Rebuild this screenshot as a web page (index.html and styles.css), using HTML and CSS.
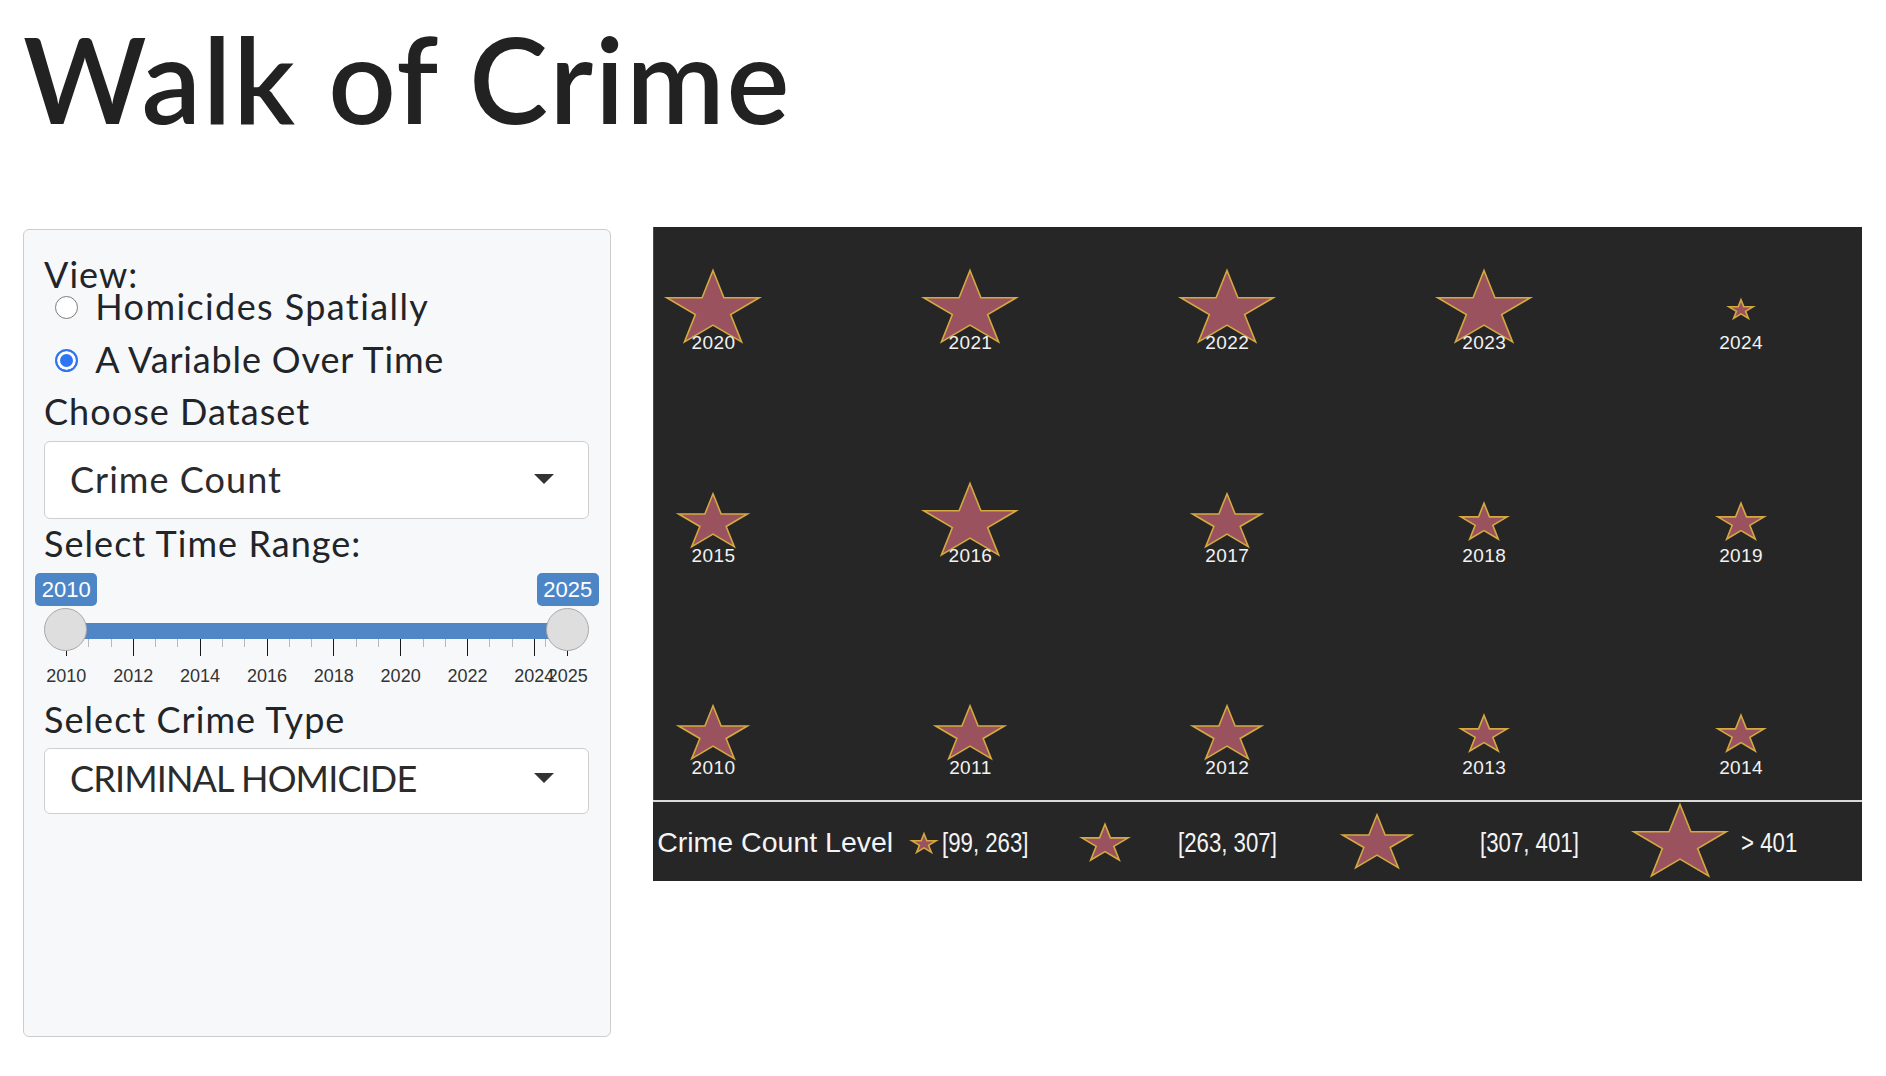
FILE: index.html
```html
<!DOCTYPE html>
<html lang="en">
<head>
<meta charset="utf-8">
<title>Walk of Crime</title>
<link rel="stylesheet" href="styles.css">
</head>
<body>
<div class="page">
  <h1 class="title">Walk of Crime</h1>
  <div class="main">
    <aside class="panel">
      <div class="lbl">View:</div>
      <div class="radio-row">
        <span class="radio"></span><span class="radio-text wide">Homicides Spatially</span>
      </div>
      <div class="radio-row second">
        <span class="radio checked"></span><span class="radio-text tight">A Variable Over Time</span>
      </div>
      <div class="lbl mt-dataset">Choose Dataset</div>
      <div class="select s1"><span>Crime Count</span><span class="caret"></span></div>
      <div class="lbl mt-range">Select Time Range:</div>
      <div class="slider">
        <div class="slider-values"><span class="val">2010</span><span class="val">2025</span></div>
        <div class="track"></div>
        <div class="ticks">
          <i class="tick"></i><i class="tick minor"></i><i class="tick minor"></i>
          <i class="tick"></i><i class="tick minor"></i><i class="tick minor"></i>
          <i class="tick"></i><i class="tick minor"></i><i class="tick minor"></i>
          <i class="tick"></i><i class="tick minor"></i><i class="tick minor"></i>
          <i class="tick"></i><i class="tick minor"></i><i class="tick minor"></i>
          <i class="tick"></i><i class="tick minor"></i><i class="tick minor"></i>
          <i class="tick"></i><i class="tick minor"></i><i class="tick minor"></i>
          <i class="tick t2024"></i><i class="tick minor t-last-minor"></i><i class="tick"></i>
        </div>
        <div class="tick-labels">
          <span class="tl">2010</span><span class="tl">2012</span><span class="tl">2014</span><span class="tl">2016</span><span class="tl">2018</span><span class="tl">2020</span><span class="tl">2022</span><span class="tl">2024</span><span class="tl last">2025</span>
        </div>
        <span class="handle h-left"></span>
        <span class="handle h-right"></span>
      </div>
      <div class="lbl">Select Crime Type</div>
      <div class="select s2"><span class="caps">CRIMINAL HOMICIDE</span><span class="caret"></span></div>
    </aside>

    <section class="chart">
      <div class="plot">
        <div class="cell"><svg class="star" width="120" height="100" viewBox="0 0 120 100"><polygon class="sp" vector-effect="non-scaling-stroke" transform="translate(60 50) scale(48.6 39.5)" points="0,-1 0.2245,-0.309 0.9511,-0.309 0.3633,0.118 0.5878,0.809 0,0.382 -0.5878,0.809 -0.3633,0.118 -0.9511,-0.309 -0.2245,-0.309"/></svg><span class="yr">2020</span></div>
        <div class="cell"><svg class="star" width="120" height="100" viewBox="0 0 120 100"><polygon class="sp" vector-effect="non-scaling-stroke" transform="translate(60 50) scale(48.6 39.5)" points="0,-1 0.2245,-0.309 0.9511,-0.309 0.3633,0.118 0.5878,0.809 0,0.382 -0.5878,0.809 -0.3633,0.118 -0.9511,-0.309 -0.2245,-0.309"/></svg><span class="yr">2021</span></div>
        <div class="cell"><svg class="star" width="120" height="100" viewBox="0 0 120 100"><polygon class="sp" vector-effect="non-scaling-stroke" transform="translate(60 50) scale(48.6 39.5)" points="0,-1 0.2245,-0.309 0.9511,-0.309 0.3633,0.118 0.5878,0.809 0,0.382 -0.5878,0.809 -0.3633,0.118 -0.9511,-0.309 -0.2245,-0.309"/></svg><span class="yr">2022</span></div>
        <div class="cell"><svg class="star" width="120" height="100" viewBox="0 0 120 100"><polygon class="sp" vector-effect="non-scaling-stroke" transform="translate(60 50) scale(48.6 39.5)" points="0,-1 0.2245,-0.309 0.9511,-0.309 0.3633,0.118 0.5878,0.809 0,0.382 -0.5878,0.809 -0.3633,0.118 -0.9511,-0.309 -0.2245,-0.309"/></svg><span class="yr">2023</span></div>
        <div class="cell"><svg class="star" width="120" height="100" viewBox="0 0 120 100"><polygon class="sp" vector-effect="non-scaling-stroke" transform="translate(60 50) scale(12.6 10.3)" points="0,-1 0.2245,-0.309 0.9511,-0.309 0.3633,0.118 0.5878,0.809 0,0.382 -0.5878,0.809 -0.3633,0.118 -0.9511,-0.309 -0.2245,-0.309"/></svg><span class="yr">2024</span></div>

        <div class="cell"><svg class="star" width="120" height="100" viewBox="0 0 120 100"><polygon class="sp" vector-effect="non-scaling-stroke" transform="translate(60 50) scale(36.2 29.2)" points="0,-1 0.2245,-0.309 0.9511,-0.309 0.3633,0.118 0.5878,0.809 0,0.382 -0.5878,0.809 -0.3633,0.118 -0.9511,-0.309 -0.2245,-0.309"/></svg><span class="yr">2015</span></div>
        <div class="cell"><svg class="star" width="120" height="100" viewBox="0 0 120 100"><polygon class="sp" vector-effect="non-scaling-stroke" transform="translate(60 50) scale(48.6 39.5)" points="0,-1 0.2245,-0.309 0.9511,-0.309 0.3633,0.118 0.5878,0.809 0,0.382 -0.5878,0.809 -0.3633,0.118 -0.9511,-0.309 -0.2245,-0.309"/></svg><span class="yr">2016</span></div>
        <div class="cell"><svg class="star" width="120" height="100" viewBox="0 0 120 100"><polygon class="sp" vector-effect="non-scaling-stroke" transform="translate(60 50) scale(36.2 29.2)" points="0,-1 0.2245,-0.309 0.9511,-0.309 0.3633,0.118 0.5878,0.809 0,0.382 -0.5878,0.809 -0.3633,0.118 -0.9511,-0.309 -0.2245,-0.309"/></svg><span class="yr">2017</span></div>
        <div class="cell"><svg class="star" width="120" height="100" viewBox="0 0 120 100"><polygon class="sp" vector-effect="non-scaling-stroke" transform="translate(60 50) scale(24.3 19.8)" points="0,-1 0.2245,-0.309 0.9511,-0.309 0.3633,0.118 0.5878,0.809 0,0.382 -0.5878,0.809 -0.3633,0.118 -0.9511,-0.309 -0.2245,-0.309"/></svg><span class="yr">2018</span></div>
        <div class="cell"><svg class="star" width="120" height="100" viewBox="0 0 120 100"><polygon class="sp" vector-effect="non-scaling-stroke" transform="translate(60 50) scale(24.3 19.8)" points="0,-1 0.2245,-0.309 0.9511,-0.309 0.3633,0.118 0.5878,0.809 0,0.382 -0.5878,0.809 -0.3633,0.118 -0.9511,-0.309 -0.2245,-0.309"/></svg><span class="yr">2019</span></div>

        <div class="cell"><svg class="star" width="120" height="100" viewBox="0 0 120 100"><polygon class="sp" vector-effect="non-scaling-stroke" transform="translate(60 50) scale(36.2 29.2)" points="0,-1 0.2245,-0.309 0.9511,-0.309 0.3633,0.118 0.5878,0.809 0,0.382 -0.5878,0.809 -0.3633,0.118 -0.9511,-0.309 -0.2245,-0.309"/></svg><span class="yr">2010</span></div>
        <div class="cell"><svg class="star" width="120" height="100" viewBox="0 0 120 100"><polygon class="sp" vector-effect="non-scaling-stroke" transform="translate(60 50) scale(36.2 29.2)" points="0,-1 0.2245,-0.309 0.9511,-0.309 0.3633,0.118 0.5878,0.809 0,0.382 -0.5878,0.809 -0.3633,0.118 -0.9511,-0.309 -0.2245,-0.309"/></svg><span class="yr">2011</span></div>
        <div class="cell"><svg class="star" width="120" height="100" viewBox="0 0 120 100"><polygon class="sp" vector-effect="non-scaling-stroke" transform="translate(60 50) scale(36.2 29.2)" points="0,-1 0.2245,-0.309 0.9511,-0.309 0.3633,0.118 0.5878,0.809 0,0.382 -0.5878,0.809 -0.3633,0.118 -0.9511,-0.309 -0.2245,-0.309"/></svg><span class="yr">2012</span></div>
        <div class="cell"><svg class="star" width="120" height="100" viewBox="0 0 120 100"><polygon class="sp" vector-effect="non-scaling-stroke" transform="translate(60 50) scale(24.3 19.8)" points="0,-1 0.2245,-0.309 0.9511,-0.309 0.3633,0.118 0.5878,0.809 0,0.382 -0.5878,0.809 -0.3633,0.118 -0.9511,-0.309 -0.2245,-0.309"/></svg><span class="yr">2013</span></div>
        <div class="cell"><svg class="star" width="120" height="100" viewBox="0 0 120 100"><polygon class="sp" vector-effect="non-scaling-stroke" transform="translate(60 50) scale(24.3 19.8)" points="0,-1 0.2245,-0.309 0.9511,-0.309 0.3633,0.118 0.5878,0.809 0,0.382 -0.5878,0.809 -0.3633,0.118 -0.9511,-0.309 -0.2245,-0.309"/></svg><span class="yr">2014</span></div>
      </div>
      <div class="sep"></div>
      <div class="legend">
        <span class="lg-title">Crime Count Level</span>
        <svg class="lg-star" width="30" height="30" viewBox="0 0 30 30"><polygon class="sp" vector-effect="non-scaling-stroke" transform="translate(15 15) scale(12.6 10.3)" points="0,-1 0.2245,-0.309 0.9511,-0.309 0.3633,0.118 0.5878,0.809 0,0.382 -0.5878,0.809 -0.3633,0.118 -0.9511,-0.309 -0.2245,-0.309"/></svg>
        <span class="lg-lbl"><span class="narrow">[99, 263]</span></span>
        <svg class="lg-star" width="60" height="50" viewBox="0 0 60 50"><polygon class="sp" vector-effect="non-scaling-stroke" transform="translate(30 25) scale(24.3 19.8)" points="0,-1 0.2245,-0.309 0.9511,-0.309 0.3633,0.118 0.5878,0.809 0,0.382 -0.5878,0.809 -0.3633,0.118 -0.9511,-0.309 -0.2245,-0.309"/></svg>
        <span class="lg-lbl"><span class="narrow">[263, 307]</span></span>
        <svg class="lg-star" width="80" height="70" viewBox="0 0 80 70"><polygon class="sp" vector-effect="non-scaling-stroke" transform="translate(40 35) scale(36.2 29.2)" points="0,-1 0.2245,-0.309 0.9511,-0.309 0.3633,0.118 0.5878,0.809 0,0.382 -0.5878,0.809 -0.3633,0.118 -0.9511,-0.309 -0.2245,-0.309"/></svg>
        <span class="lg-lbl"><span class="narrow">[307, 401]</span></span>
        <svg class="lg-star" width="104" height="84" viewBox="0 0 104 84"><polygon class="sp" vector-effect="non-scaling-stroke" transform="translate(52 42) scale(48.6 39.5)" points="0,-1 0.2245,-0.309 0.9511,-0.309 0.3633,0.118 0.5878,0.809 0,0.382 -0.5878,0.809 -0.3633,0.118 -0.9511,-0.309 -0.2245,-0.309"/></svg>
        <span class="lg-lbl"><span class="narrow">&gt; 401</span></span>
      </div>
    </section>
  </div>
</div>
</body>
</html>
```

FILE: styles.css
```css
html, body {
  margin: 0;
  padding: 0;
  background: #ffffff;
}

body {
  font-family: Lato, "Noto Sans", sans-serif;
  color: #212529;
}

.page {
  padding: 19px 25px 0 23px;
}

.title {
  margin: 0 0 89.5px 0;
  height: 118.5px;
  font-size: 118.5px;
  line-height: 1;
  font-weight: 600;
  letter-spacing: 1.8px;
  color: #222222;
  white-space: nowrap;
}

.main {
  display: flex;
  align-items: flex-start;
  gap: 41.5px;
}

/* ---------- sidebar panel ---------- */
.panel {
  flex: none;
  margin-top: 2px;
  width: 588px;
  height: 808px;
  box-sizing: border-box;
  border: 1px solid #cdcdcd;
  border-radius: 6px;
  background: #f7f8fa;
  padding: 28px 21px 0 20px;
  font-size: 36px;
  letter-spacing: 1.05px;
}

.lbl {
  line-height: 32px;
  height: 32px;
  white-space: nowrap;
}

.mt-dataset {
  margin-top: 20px;
}

.mt-range {
  margin-top: 7.8px;
}

.radio-row {
  display: flex;
  align-items: flex-start;
  height: 32px;
  line-height: 32px;
  white-space: nowrap;
}

.radio-row.second {
  margin-top: 21px;
}

.wide {
  letter-spacing: 1.4px;
}

.tight {
  letter-spacing: 0.85px;
}

.radio {
  flex: none;
  width: 23px;
  height: 23px;
  box-sizing: border-box;
  margin: 6px 17.5px 0 10.8px;
  border-radius: 50%;
  border: 1.5px solid #7b7b7b;
  background: #ffffff;
}

.radio.checked {
  border: 2px solid #2f74f2;
  background: #2f74f2;
  box-shadow: inset 0 0 0 3px #ffffff;
}

.select {
  display: flex;
  align-items: center;
  justify-content: space-between;
  box-sizing: border-box;
  background: #ffffff;
  border: 1px solid #cfcfcf;
  border-radius: 6px;
  line-height: 44px;
  white-space: nowrap;
  color: #2b2b2b;
}

.select.s1 {
  margin-top: 13.7px;
  height: 78.3px;
  padding: 0 34px 2px 25px;
}

.select.s2 {
  margin-top: 12.9px;
  height: 66.6px;
  padding: 0 34px 5px 25px;
}

.caps {
  letter-spacing: -0.85px;
}

.caret {
  width: 0;
  height: 0;
  border-left: 10px solid transparent;
  border-right: 10px solid transparent;
  border-top: 10px solid #333333;
}

/* ---------- range slider ---------- */
.slider {
  position: relative;
  height: 144px;
  box-sizing: border-box;
  padding-top: 13.9px;
  letter-spacing: 0;
}

.slider-values {
  display: flex;
  justify-content: space-between;
  margin: 0 -9.6px 0 -8.6px;
}

.val {
  width: 61.5px;
  height: 33.6px;
  line-height: 34px;
  border-radius: 5px;
  background: #4c86c7;
  color: #ffffff;
  font-family: "Liberation Sans", Arial, sans-serif;
  font-size: 22px;
  text-align: center;
}

.track {
  margin: 17px 0 0 22px;
  width: 502px;
  height: 16px;
  background: #5186c6;
}

.ticks {
  display: flex;
  align-items: flex-start;
  margin-left: 22px;
  height: 17px;
}

.tick {
  flex: none;
  width: 1px;
  height: 17px;
  margin-right: 21.29px;
  background: #1a1a1a;
}

.tick.minor {
  height: 8px;
  background: #b8b8b8;
}

.tick.t2024 {
  margin-right: 10.2px;
}

.tick.t-last-minor {
  margin-right: 21.1px;
}

.tick-labels {
  display: flex;
  margin: 9.5px 0 0 -11.1px;
  font-family: "Liberation Sans", Arial, sans-serif;
  font-size: 18px;
  line-height: 20px;
  color: #333333;
}

.tl {
  flex: none;
  width: 66.86px;
  text-align: center;
}

.tl.last {
  width: 60px;
  margin-left: -30px;
}

.handle {
  position: absolute;
  top: 49.4px;
  width: 43px;
  height: 43px;
  box-sizing: border-box;
  border-radius: 50%;
  border: 1.5px solid #a8a8a8;
  background: #dedede;
}

.h-left {
  left: 0;
}

.h-right {
  left: 501.8px;
}

/* ---------- chart ---------- */
.chart {
  flex: none;
  width: 1209px;
}

.plot {
  height: 573px;
  box-sizing: border-box;
  background: #262626;
  border-left: 1px solid #4a4a4a;
  padding-top: 33px;
  display: grid;
  grid-template-columns: repeat(5, 120px);
  column-gap: 136.9px;
  grid-auto-rows: 212.5px;
  align-content: start;
}

.cell {
  display: flex;
  flex-direction: column;
  align-items: center;
}

.star {
  display: block;
  margin-left: -1px;
}

.sp {
  fill: #99525e;
  stroke: #d3a940;
  stroke-width: 1.6;
  stroke-linejoin: miter;
}

.yr {
  display: block;
  margin-top: -26.6px;
  font-family: "Liberation Sans", Arial, sans-serif;
  font-size: 19px;
  letter-spacing: 0.4px;
  line-height: 20px;
  color: #f2f2f2;
}

.sep {
  height: 2px;
  background: #d9d9d9;
}

.legend {
  height: 79px;
  box-sizing: border-box;
  background: #262626;
  padding-left: 4.7px;
  display: grid;
  grid-template-columns: 251.9px 32.8px 133.5px 102.7px 159.3px 142.3px 148px 113.4px auto;
  align-items: center;
  color: #f4f4f4;
  font-family: "Liberation Sans", Arial, sans-serif;
  font-size: 28.5px;
  line-height: 32px;
  white-space: nowrap;
}

.lg-title,
.lg-lbl {
  padding-bottom: 4px;
}

.lg-star {
  display: block;
}

.narrow {
  display: inline-block;
  transform: scaleX(0.78);
  transform-origin: left center;
}
```
